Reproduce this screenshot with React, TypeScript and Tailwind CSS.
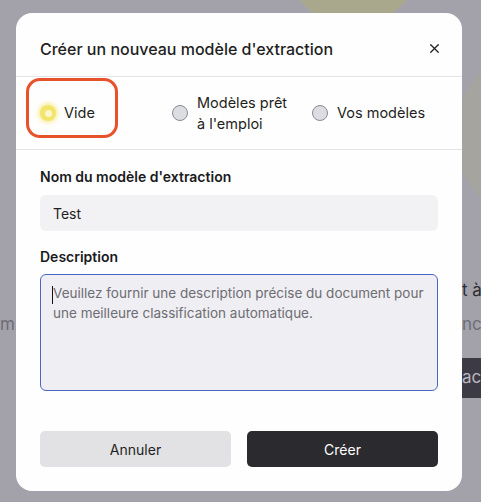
import React from "react";
import { X } from "lucide-react";

function Radio({ checked }: { checked?: boolean }) {
  if (checked) {
    return (
      <span className="flex h-[16px] w-[16px] shrink-0 items-center justify-center rounded-full bg-[#f3e46a] shadow-[0_0_4px_2px_rgba(245,228,100,0.6)]">
        <span className="h-[7px] w-[7px] rounded-full bg-[#fbf6cf]" />
      </span>
    );
  }
  return (
    <span className="h-[16px] w-[16px] shrink-0 rounded-full border border-[#8b8b93] bg-[#dcdce3]" />
  );
}

export default function App() {
  return (
    <div
      className="relative h-[502px] w-[481px] overflow-hidden bg-[#a3a2ab]"
      style={{ fontFamily: "Inter, 'Noto Sans', sans-serif" }}
    >
      {/* page behind the overlay */}
      <div className="absolute left-[285px] top-[-110px] h-[136px] w-[136px] rounded-full bg-[#aaa88c]" />
      <div className="absolute left-[455px] top-[45px] h-[180px] w-[180px] rounded-full bg-[#a6a596] opacity-60" />
      <span className="absolute left-[462px] top-[278px] whitespace-nowrap text-[17px] text-[#2d2c33]">
        t à
      </span>
      <span className="absolute left-[462px] top-[312px] whitespace-nowrap text-[17px] text-[#6e6d76]">
        nc
      </span>
      <span className="absolute left-[0px] top-[312px] text-[17px] text-[#6e6d76]">m</span>
      <div className="absolute left-[462px] top-[358px] flex h-[40px] w-[19px] items-center overflow-hidden whitespace-nowrap bg-[#3b3a45] text-[17px] text-[#b9b8c2]">
        act
      </div>

      {/* modal */}
      <div className="relative ml-[16px] mt-[13px] w-[446px] rounded-[16px] bg-[#fefefe] pb-[24px]">
        <div className="flex h-[63px] items-center justify-between pl-[24px] pr-[20px] pt-[8px]">
          <h2 className="text-[16px] font-medium text-[#1f1f22]">
            Créer un nouveau modèle d'extraction
          </h2>
          <X className="h-[15px] w-[15px] text-[#1f1f22]" strokeWidth={2} />
        </div>
        <div className="h-px bg-[#e4e4e8]" />

        <div className="flex h-[72px] items-center pl-[24px] text-[14.5px] text-[#1f1f22]">
          <div className="relative flex w-[132px] items-center gap-[8px]">
            <div className="absolute left-[-14px] top-[-24px] h-[60px] w-[92px] rounded-[14px] border-[3px] border-[#e8522a]" />
            <Radio checked />
            <span>Vide</span>
          </div>
          <div className="flex w-[140px] items-center gap-[9px]">
            <Radio />
            <span className="leading-[21px]">
              Modèles prêt
              <br />à l'emploi
            </span>
          </div>
          <div className="flex items-center gap-[9px]">
            <Radio />
            <span>Vos modèles</span>
          </div>
        </div>
        <div className="h-px bg-[#e4e4e8]" />

        <div className="px-[24px] pt-[16px]">
          <label className="block text-[14px] font-semibold text-[#1a1a1d]">
            Nom du modèle d'extraction
          </label>
          <div className="mt-[8px] flex h-[36px] items-center rounded-[6px] bg-[#f2f2f4] px-[13px] text-[14px] text-[#1f1f22]">
            Test
          </div>

          <label className="mt-[15px] block text-[14px] font-semibold text-[#1a1a1d]">
            Description
          </label>
          <div className="mt-[7px] h-[117px] rounded-[6px] border border-[#4a66c4] bg-[#efeef2] px-[12px] pt-[8px] text-[13.5px] leading-[20px] text-[#6d6d73]">
            <span className="relative">
              <span className="absolute left-[-1px] top-[1px] h-[18px] w-px bg-[#111]" />
              Veuillez fournir une description précise du document pour une
              meilleure classification automatique.
            </span>
          </div>

          <div className="mt-[40px] flex gap-[16px]">
            <button className="h-[36px] flex-1 rounded-[5px] bg-[#e2e2e5] text-[14px] text-[#1f1f22]">
              Annuler
            </button>
            <button className="h-[36px] flex-1 rounded-[5px] bg-[#2b2a2e] text-[14px] text-white">
              Créer
            </button>
          </div>
        </div>
      </div>
    </div>
  );
}
